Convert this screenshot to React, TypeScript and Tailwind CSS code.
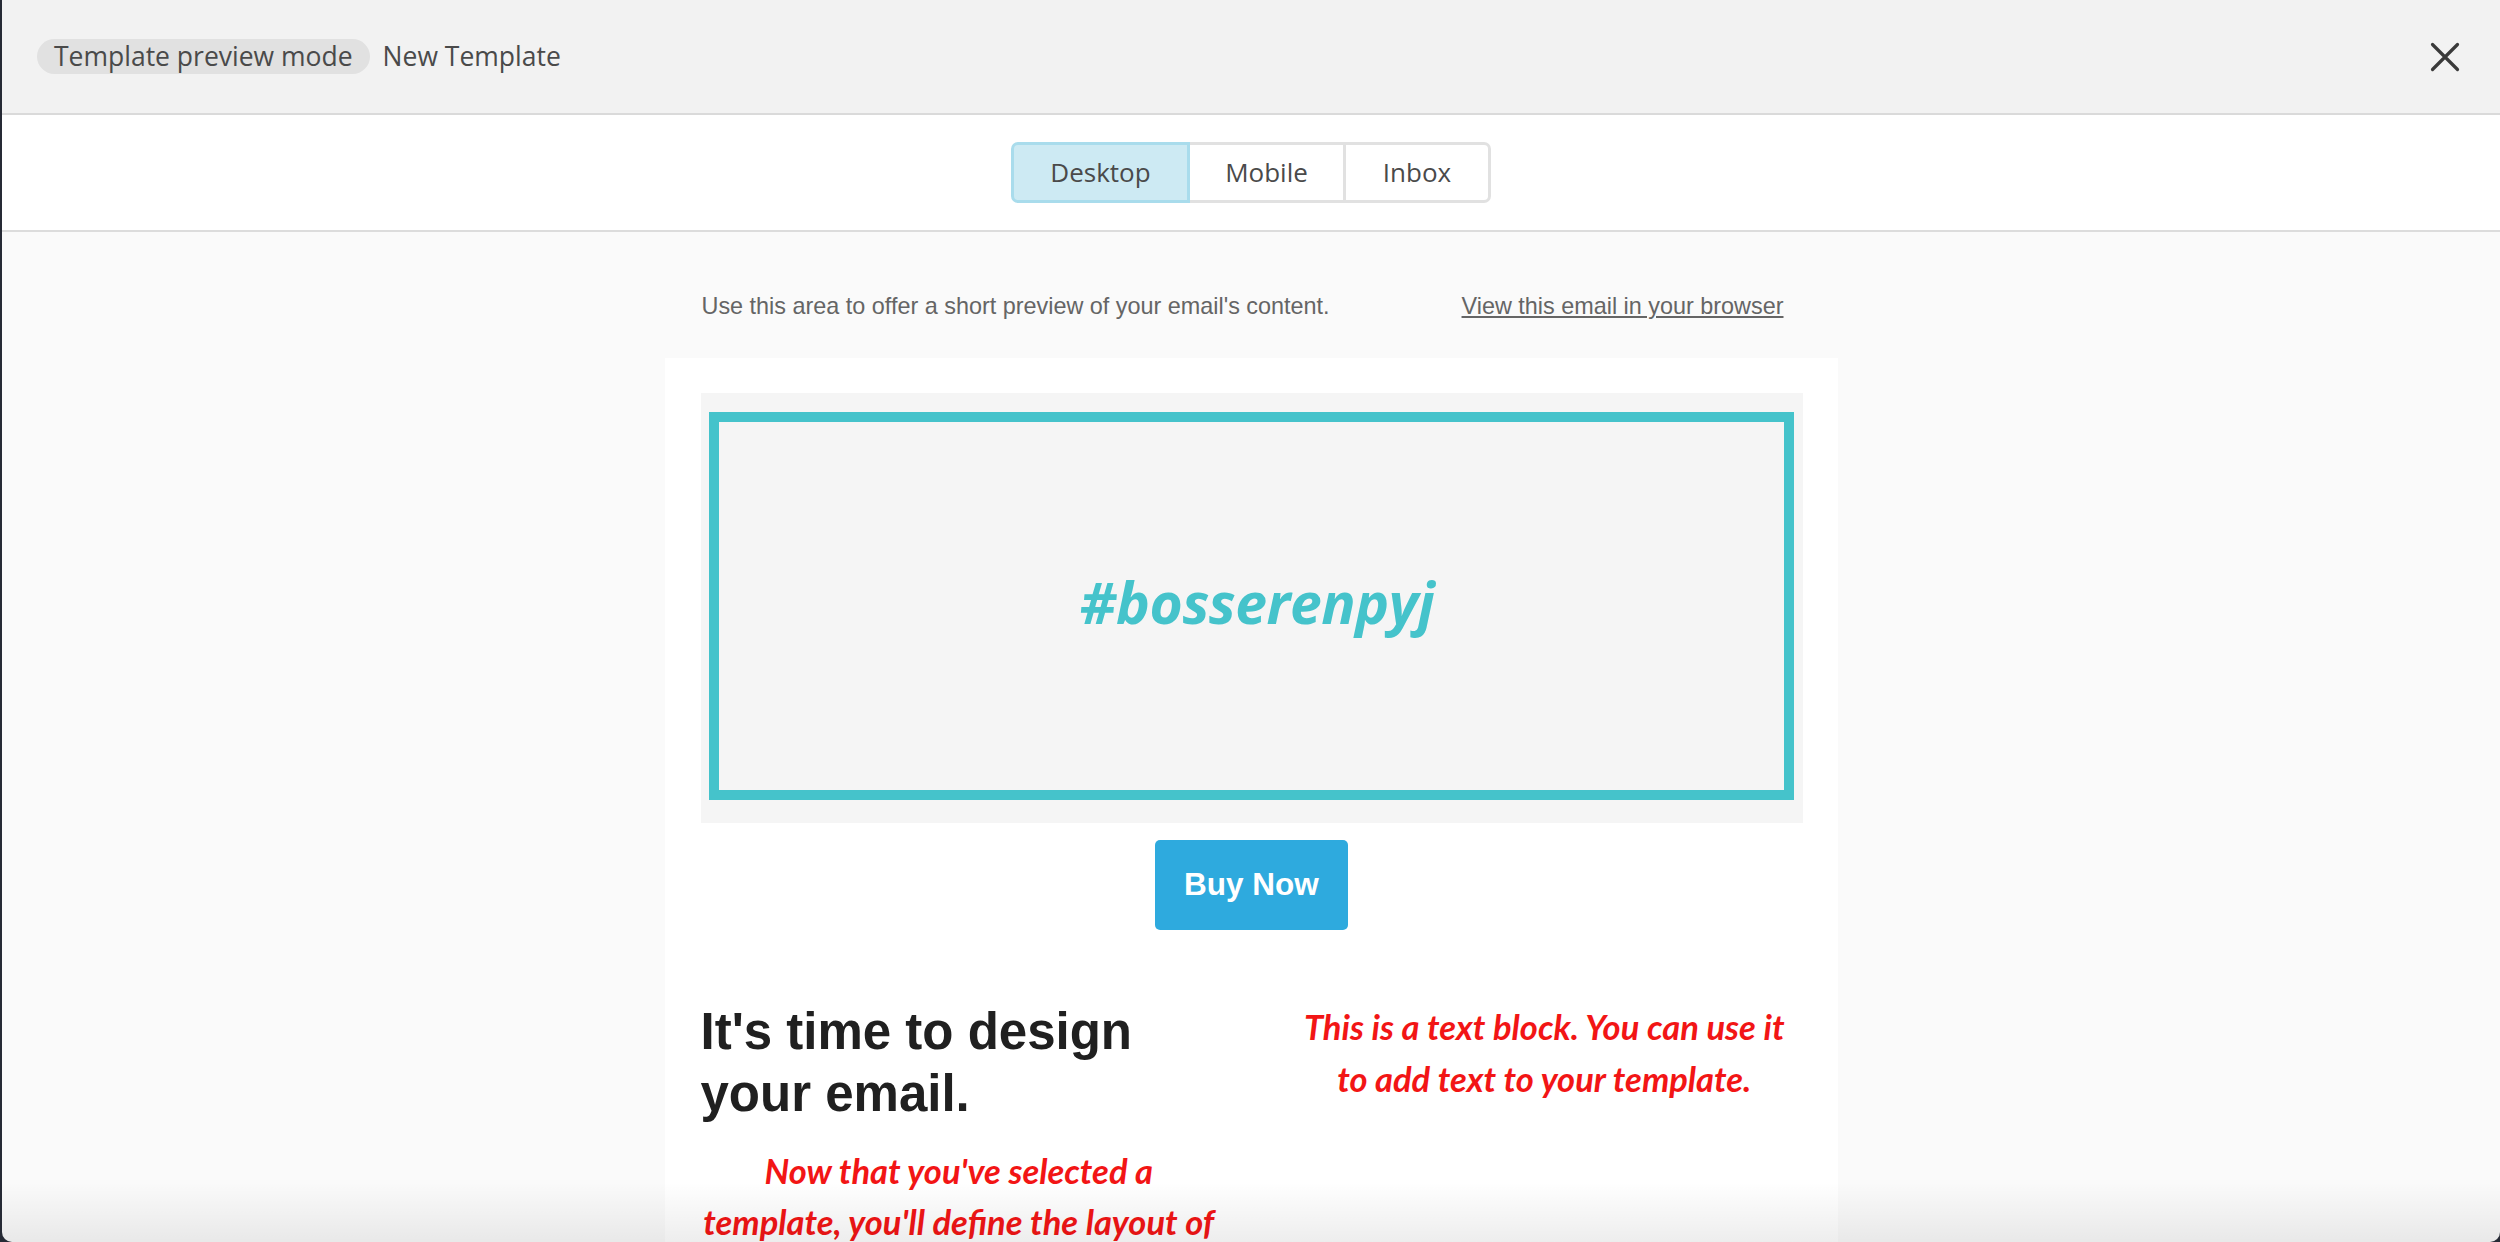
import React from "react";

const openSans = { fontFamily: '"Open Sans", "Noto Sans", sans-serif' };

function CloseIcon() {
  return (
    <svg width="30" height="30" viewBox="0 0 30 30" fill="none">
      <path d="M2.5 2.5 L27.5 27.5 M27.5 2.5 L2.5 27.5" stroke="#3a3a3a" strokeWidth="3.2" strokeLinecap="round" />
    </svg>
  );
}

export default function App() {
  return (
    <div className="w-full h-[1242px] bg-[#262a35] flex overflow-hidden">
      <div className="relative ml-[2px] flex-1 h-[1242px] overflow-hidden rounded-b-[10px] bg-[#fafafa] flex flex-col">
        {/* Header */}
        <div className="h-[115px] shrink-0 bg-[#f2f2f2] border-b-2 border-[#dadada] flex items-center justify-between pl-[35px] pr-[40px]">
          <div className="flex items-center gap-[13px] text-[26.5px] text-[#4a4a4a]" style={openSans}>
            <span className="h-[35px] flex items-center rounded-full bg-[#e1e1e1] px-[17px] leading-none">Template preview mode</span>
            <span className="leading-none">New Template</span>
          </div>
          <button className="w-[30px] h-[30px] flex items-center justify-center">
            <CloseIcon />
          </button>
        </div>

        {/* Tab bar */}
        <div className="h-[117px] shrink-0 bg-white border-b-2 border-[#dcdcdc] flex items-center justify-center">
          <div className="flex h-[61px] text-[26px] text-[#4a4a4a]" style={openSans}>
            <div className="w-[179px] h-full flex items-center justify-center bg-[#cdeaf3] border-[3px] border-[#a9dcec] rounded-l-[7px]">Desktop</div>
            <div className="w-[156px] h-full flex items-center justify-center bg-white border-y-[3px] border-r-[3px] border-[#e1e1e1]">Mobile</div>
            <div className="w-[145px] h-full flex items-center justify-center bg-white border-y-[3px] border-r-[3px] border-[#e1e1e1] rounded-r-[7px]">Inbox</div>
          </div>
        </div>

        {/* Content */}
        <div className="flex-1 flex flex-col items-center">
          <div
            className="w-[1173px] shrink-0 pt-[57px] pb-[35px] pl-[37px] pr-[54px] flex justify-between text-[23.4px] leading-[34px] text-[#656565]"
            style={{ fontFamily: '"Liberation Sans", Arial, sans-serif' }}
          >
            <span>Use this area to offer a short preview of your email's content.</span>
            <span className="underline">View this email in your browser</span>
          </div>

          <div className="w-[1173px] flex-1 bg-white pl-[36px] pr-[35px] pt-[35px]">
            <div className="h-[430px] bg-[#f5f5f5] pt-[19px] pb-[23px] pl-[8px] pr-[9px]">
              <div className="h-full border-[10px] border-[#45c3cb] flex items-center justify-center pb-[8px] pl-[12px]">
                <span className="text-[57px] font-bold italic text-[#45c3cb] leading-none tracking-[-0.5px]" style={openSans}>#bosserenpyj</span>
              </div>
            </div>

            <div className="flex justify-center mt-[17px]">
              <div
                className="w-[193px] h-[90px] rounded-[5px] bg-[#2eaade] text-white font-bold text-[31.5px] flex items-center justify-center"
                style={{ fontFamily: '"Liberation Sans", Arial, sans-serif' }}
              >
                Buy Now
              </div>
            </div>

            <div className="mt-[71px] grid grid-cols-2 gap-[69px]">
              <div>
                <h1
                  className="text-[51px] leading-[62px] font-bold text-[#202020]"
                  style={{ fontFamily: '"Liberation Sans", Arial, sans-serif' }}
                >
                  It's time to design your email.
                </h1>
                <p
                  className="mt-[20px] text-center text-[34.5px] leading-[51px] font-bold italic text-[#f21515]"
                  style={{ fontFamily: 'Lato, "Open Sans", sans-serif' }}
                >
                  <span className="whitespace-nowrap">Now that you've selected a</span>
                  <br />
                  <span className="whitespace-nowrap">template, you'll define the layout of</span>
                  <br />
                  <span className="whitespace-nowrap">your email and give your content a</span>
                  <br />
                  <span className="whitespace-nowrap">place to live by adding, rearranging,</span>
                </p>
              </div>
              <div>
                <p
                  className="text-center text-[34.5px] leading-[52px] font-bold italic text-[#f21515]"
                  style={{ fontFamily: 'Lato, "Open Sans", sans-serif' }}
                >
                  <span className="whitespace-nowrap">This is a text block. You can use it</span>
                  <br />
                  <span className="whitespace-nowrap">to add text to your template.</span>
                </p>
              </div>
            </div>
          </div>
        </div>

        {/* bottom fade */}
        <div className="pointer-events-none absolute left-0 right-0 bottom-0 h-[60px] bg-gradient-to-t from-black/[0.07] to-transparent" />
      </div>
    </div>
  );
}
